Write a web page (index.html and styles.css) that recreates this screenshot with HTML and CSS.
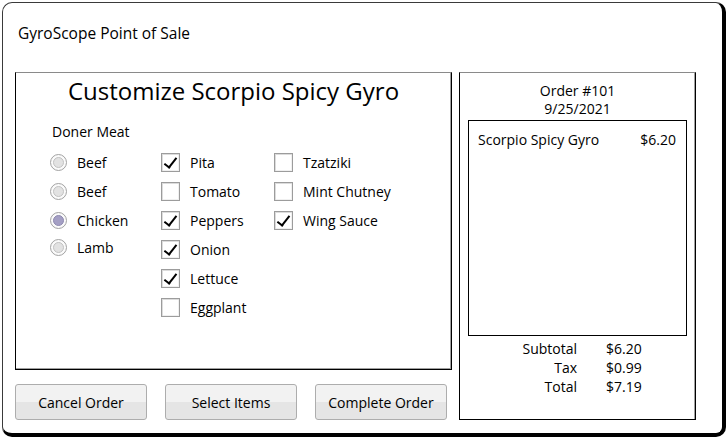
FILE: index.html
```html
<!DOCTYPE html>
<html>
<head>
<meta charset="utf-8">
<link rel="stylesheet" href="styles.css">
</head>
<body>
<div class="window">
  <div class="app-title">GyroScope Point of Sale</div>
  <div class="main">
    <div class="left-col">
      <div class="panel custom">
        <h1 class="heading">Customize Scorpio Spicy Gyro</h1>
        <div class="options">
          <div class="col col-meat">
            <div class="group-label">Doner Meat</div>
            <div class="opt"><span class="radio"></span><span>Beef</span></div>
            <div class="opt"><span class="radio"></span><span>Beef</span></div>
            <div class="opt"><span class="radio on"></span><span>Chicken</span></div>
            <div class="opt opt-tight"><span class="radio"></span><span>Lamb</span></div>
          </div>
          <div class="col col-a">
            <div class="opt"><span class="check on"></span><span>Pita</span></div>
            <div class="opt"><span class="check"></span><span>Tomato</span></div>
            <div class="opt"><span class="check on"></span><span>Peppers</span></div>
            <div class="opt"><span class="check on"></span><span>Onion</span></div>
            <div class="opt"><span class="check on"></span><span>Lettuce</span></div>
            <div class="opt"><span class="check"></span><span>Eggplant</span></div>
          </div>
          <div class="col col-b">
            <div class="opt"><span class="check"></span><span>Tzatziki</span></div>
            <div class="opt"><span class="check"></span><span>Mint Chutney</span></div>
            <div class="opt"><span class="check on"></span><span>Wing Sauce</span></div>
          </div>
        </div>
      </div>
      <div class="buttons">
        <button class="btn">Cancel Order</button>
        <button class="btn">Select Items</button>
        <button class="btn">Complete Order</button>
      </div>
    </div>
    <div class="panel order">
      <div class="order-head">Order #101<br>9/25/2021</div>
      <div class="list">
        <div class="item"><span>Scorpio Spicy Gyro</span><span>$6.20</span></div>
      </div>
      <div class="totals">
        <span class="t-label">Subtotal</span><span>$6.20</span>
        <span class="t-label">Tax</span><span>$0.99</span>
        <span class="t-label">Total</span><span>$7.19</span>
      </div>
    </div>
  </div>
</div>
</body>
</html>
```
FILE: styles.css
```css
* { box-sizing: border-box; }
html, body { margin: 0; padding: 0; background: #fff; }
body {
  font-family: "Open Sans", "Noto Sans", sans-serif;
  font-size: 14px;
  color: #000;
  padding: 2px 0 0 2px;
}
.window {
  width: 724px;
  height: 435px;
  border-style: solid;
  border-width: 1px 4px 4px 1px;
  border-color: #3a3a3a #000 #000 #3a3a3a;
  border-radius: 10px;
  background: #fff;
  display: flex;
  flex-direction: column;
}
.app-title {
  height: 69px;
  padding: 21px 0 0 15px;
  font-size: 15.5px;
  line-height: 18px;
}
.main {
  display: flex;
  padding-left: 12px;
  gap: 7px;
}
.left-col {
  display: flex;
  flex-direction: column;
  width: 437px;
}
.panel {
  border: 1px solid #000;
  border-top-color: #8a8a8a;
}
.custom {
  height: 298px;
  box-shadow: inset -1px 0 0 #a0a0a0, inset 0 -1px 0 #a0a0a0;
}
.heading {
  margin: 0;
  font-weight: normal;
  font-size: 24px;
  line-height: 30px;
  text-align: center;
  padding-top: 3px;
}
.options {
  display: flex;
  padding: 14px 0 0 34px;
}
.col { display: flex; flex-direction: column; }
.col-meat { width: 111px; }
.col-a { width: 113px; padding-top: 28px; }
.col-b { padding-top: 28px; }
.group-label {
  height: 28px;
  padding-top: 3px;
  padding-left: 2px;
  line-height: 18px;
}
.opt {
  height: 29px;
  display: flex;
  align-items: center;
  gap: 10px;
}
.opt-tight { height: 25px; }
.radio {
  width: 17px;
  height: 17px;
  border: 1px solid #a2a2a2;
  border-radius: 50%;
  background: #fafafa;
  display: flex;
  align-items: center;
  justify-content: center;
}
.radio::after {
  content: "";
  width: 9px;
  height: 9px;
  border-radius: 50%;
  background: #e2e2e2;
  border: 1px solid #c2c2c2;
}
.radio.on::after {
  background: #a49fc4;
  border-color: #8e89b0;
}
.check {
  width: 19px;
  height: 19px;
  border: 1px solid #9c9c9c;
  background: #fff;
  box-shadow: inset 1px 1px 0 #dcdcdc, inset -1px -1px 0 #f0f0f0;
  position: relative;
}
.check.on::after {
  content: "";
  position: absolute;
  left: 5px;
  top: 1px;
  width: 5px;
  height: 11px;
  border-right: 2.5px solid #000;
  border-bottom: 2.5px solid #000;
  transform: rotate(38deg);
}
.buttons {
  display: flex;
  gap: 18px;
  margin-top: 14px;
}
.btn {
  width: 132px;
  height: 36px;
  font-family: inherit;
  font-size: 14px;
  color: #000;
  border: 1px solid #adadad;
  border-radius: 3px;
  background: linear-gradient(#f2f2f2 0, #f2f2f2 50%, #e5e5e5 50%, #e5e5e5 100%);
  padding: 0;
}
.order {
  width: 237px;
  height: 348px;
  box-shadow: inset -1px 0 0 #a0a0a0;
  display: flex;
  flex-direction: column;
  padding: 9px 8px 0 8px;
}
.order-head {
  text-align: center;
  line-height: 18px;
}
.list {
  margin-top: 2px;
  height: 216px;
  border: 1px solid #000;
  padding: 10px 10px 0 9px;
}
.item {
  display: flex;
  justify-content: space-between;
  line-height: 18px;
}
.totals {
  display: grid;
  grid-template-columns: 109px auto;
  column-gap: 29px;
  row-gap: 1px;
  margin-top: 4px;
  line-height: 18px;
}
.t-label { text-align: right; }
```
